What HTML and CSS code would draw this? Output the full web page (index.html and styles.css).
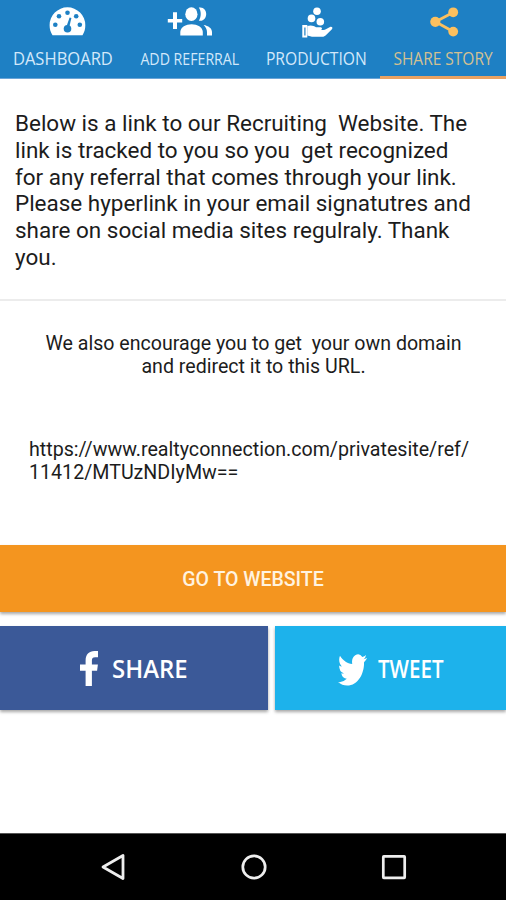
FILE: index.html
```html
<!DOCTYPE html>
<html lang="en">
<head>
  <meta charset="UTF-8">
  <meta name="viewport" content="width=device-width, initial-scale=1">
  <title>Share Story</title>
  <link rel="stylesheet" href="styles.css">
</head>
<body>

<nav class="tabs">
  <a class="tab">
    <svg class="tab-icon" viewBox="0 0 126 40">
      <path fill="#fff" d="M52.5 35.2C50.5 32 49.6 28.800 49.600 25.200A17.850 17.850 0 0 1 85.300 25.200C85.300 28.800 84.500 32 82.500 35.200Z"/>
      <g fill="#1e80c4">
        <circle cx="55.300" cy="24.800" r="2.300"/>
        <circle cx="59" cy="16.300" r="2.300"/>
        <circle cx="67.500" cy="12.700" r="2.300"/>
        <circle cx="76.200" cy="16.300" r="2.300"/>
        <circle cx="79.800" cy="24.800" r="2.300"/>
        <circle cx="67.500" cy="28.800" r="3.800"/>
        <path d="M66.300 27L69.600 17.500L71.400 18L69.300 27Z"/>
      </g>
    </svg>
    <span class="tab-label label-dashboard">DASHBOARD</span>
  </a>
  <a class="tab">
    <svg class="tab-icon" viewBox="0 0 126 40">
      <g fill="#fff">
        <path d="M46 12.300h4v6.600h5.200v3.600h-5.200v6.600h-4v-6.600h-5.200v-3.600h5.200z"/>
        <ellipse cx="64.400" cy="14.200" rx="6.100" ry="6.900"/>
        <path d="M53.300 35.500v-3.400c0-4.900 5.600-7.900 11.300-7.900s11.200 3 11.200 7.900v3.400z"/>
        <path d="M71.800 7.600c4.500-1 7.400 2.400 7.400 6.500s-2.900 7.600-7.400 6.600c2.600-3.600 2.600-9.500 0-13.100z"/>
        <path d="M76.600 25c4.800.8 8.400 3.200 8.400 7.100v3.400h-5v-3.400c0-2.900-1.400-5.300-3.400-7.100z"/>
      </g>
    </svg>
    <span class="tab-label label-referral">ADD REFERRAL</span>
  </a>
  <a class="tab">
    <svg class="tab-icon" viewBox="0 0 126 40">
      <g fill="#fff">
        <circle cx="64" cy="11.200" r="3.800"/>
        <circle cx="58.500" cy="18.400" r="3.800"/>
        <circle cx="67.300" cy="21.700" r="3.800"/>
        <path fill-rule="evenodd" d="M49.300 25h5v12.500h-5zM51.300 27.500v8h1.200v-8z"/>
        <path d="M54.300 26c3-1.200 6.500-.6 8.700 1.300h4.500c1.800 0 2 2.400.3 2.700h2.500c1.200 0 2-.3 3-.9l3.700-2.100c1.800-.8 3.300.8 1.900 2.200l-5.800 5.800c-1.200 1.200-2.200 1.800-4 1.800H59l-4.700-1.300z"/>
      </g>
    </svg>
    <span class="tab-label label-production">PRODUCTION</span>
  </a>
  <a class="tab active">
    <svg class="tab-icon" viewBox="0 0 126 40">
      <path d="M73 12.500L55.500 21.800L73 31.500" fill="none" stroke="#fcc05f" stroke-width="2.800"/>
      <g fill="#fcc05f">
        <circle cx="73.200" cy="12.300" r="4.900"/>
        <circle cx="55.300" cy="21.800" r="5.100"/>
        <circle cx="73.200" cy="31.600" r="4.900"/>
      </g>
    </svg>
    <span class="tab-label label-story">SHARE STORY</span>
  </a>
</nav>

<p class="intro">Below is a link to our Recruiting&nbsp; Website. The<br>link is tracked to you so you&nbsp; get recognized<br>for any referral that comes through your link.<br>Please hyperlink in your email signatutres and<br>share on social media sites regulraly. Thank<br>you.</p>

<p class="domain">We also encourage you to get&nbsp; your own domain<br>and redirect it to this URL.</p>

<p class="url">https://www.realtyconnection.com/privatesite/ref/<br>11412/MTUzNDIyMw==</p>

<button class="btn website">GO TO WEBSITE</button>

<div class="social">
  <button class="btn facebook">
    <svg class="fb-icon" width="18" height="35" viewBox="0 0 18 35">
      <path fill="#fff" d="M5.600 35V19.800H0v-6.200h5.600V9.500C5.600 3.500 9 0 14.500 0H18v6.200h-2.800c-2.500 0-3.300 1.200-3.300 3.400v4h6l-.8 6.200h-5.200V35z"/>
    </svg>
    <span class="share-text">SHARE</span>
  </button>
  <button class="btn twitter">
    <svg class="tw-icon" width="29" height="32" viewBox="0 2 24 20" preserveAspectRatio="none">
      <path fill="#fff" d="M23.950 4.570a10 10 0 0 1-2.820.77 4.960 4.960 0 0 0 2.160-2.720c-.95.550-2 .950-3.130 1.180a4.920 4.920 0 0 0-8.380 4.480C7.690 8.100 4.070 6.130 1.640 3.160a4.820 4.820 0 0 0-.67 2.480c0 1.710.87 3.210 2.190 4.100a4.900 4.900 0 0 1-2.230-.62v.06a4.920 4.920 0 0 0 3.950 4.830 5 5 0 0 1-2.210.080 4.940 4.940 0 0 0 4.600 3.420A9.870 9.870 0 0 1 0 19.540a13.990 13.990 0 0 0 7.550 2.210c9.050 0 14-7.500 14-13.980 0-.21 0-.42-.02-.63a9.940 9.940 0 0 0 2.460-2.550z"/>
    </svg>
    <span class="tweet-text">TWEET</span>
  </button>
</div>

<footer class="navbar">
  <svg width="28" height="30" viewBox="0 0 28 30"><path d="M24 3.500V26.500L4 15z" fill="none" stroke="#eee" stroke-width="2.800" stroke-linejoin="round"/></svg>
  <svg width="28" height="30" viewBox="0 0 28 30"><circle cx="14" cy="15" r="11.200" fill="none" stroke="#eee" stroke-width="2.700"/></svg>
  <svg width="28" height="30" viewBox="0 0 28 30"><rect x="3.300" y="4.400" width="21.400" height="21.400" rx=".5" fill="none" stroke="#eee" stroke-width="2.700"/></svg>
</footer>

</body>
</html>
```
FILE: styles.css
```css
* { box-sizing: border-box; }
body {
  margin: 0;
  height: 900px;
  display: flex; flex-direction: column;
  background: #fff;
  color: #1c1c1c;
  font-family: Roboto, sans-serif;
  overflow: hidden;
}
p { margin: 0; white-space: nowrap; }

.tabs { display: grid; grid-template-columns: repeat(4, 1fr); height: 79px; background: #1e80c4; }
.tab {
  display: flex; flex-direction: column; align-items: center;
  border-bottom: 1px solid #6aa5d8;
  color: #d3e8fa;
  font-family: "Open Sans", sans-serif;
}
.tab.active { border-bottom: 3px solid #e9a263; color: #d3c092; }
.tab-icon { width: 126px; height: 40px; }

/* condensed labels */
.tab-label { line-height: 24px; margin-top: 6px; font-size: 17.5px; white-space: nowrap; }
.label-dashboard { transform: scaleX(.945); }
.label-referral { font-size: 16px; margin-top: 7px; transform: scaleX(.885); }
.label-production { transform: scaleX(.895); }
.label-story { transform: scaleX(.885); }

.intro {
  height: 222px;
  padding: 31px 15px 0;
  border-bottom: 2px solid #ececec;
  font-size: 22.46px; line-height: 26.8px;
}
.domain { padding: 31px 0 0 1px; text-align: center; font-size: 19.6px; line-height: 23px; }
.url { padding: 60px 29px 0; font-size: 19.65px; line-height: 23px; }

.btn {
  display: flex; align-items: center; justify-content: center;
  padding: 0; border: 0;
  color: #fff;
  box-shadow: 0 2px 3px rgba(0, 0, 0, .35);
}
.website {
  flex: none;
  height: 67px; margin-top: 61px; padding-top: 2px;
  background: #f4951f;
  color: #fff3e0;
  font: 500 19.5px Roboto, sans-serif;
}
.social { display: grid; grid-template-columns: 268px 1fr; gap: 7px; height: 84px; margin-top: 14px; }
.social .btn { justify-content: flex-start; font: 600 26px "Open Sans", sans-serif; }
.social span { transform-origin: left; }
.facebook { background: #3b5998; gap: 14px; padding-left: 80px; }
.twitter { background: #1db2eb; gap: 11px; padding-left: 63px; }
.tw-icon { margin-top: 4px; }
.share-text { transform: scaleX(.92); }
.tweet-text { transform: scaleX(.79); }

.navbar {
  display: flex; justify-content: center; gap: 112.5px; align-items: center;
  height: 67px; margin-top: auto;
  padding-left: 1px;
  border-top: 1px solid #555;
  background: #000;
}
```
